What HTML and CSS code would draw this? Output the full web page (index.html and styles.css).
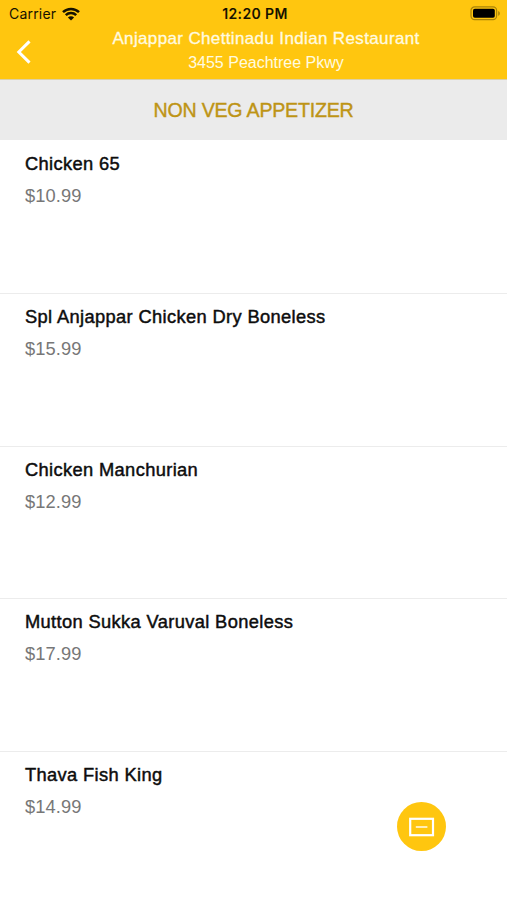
FILE: index.html
```html
<!DOCTYPE html>
<html lang="en">
<head>
  <meta charset="UTF-8">
  <meta name="viewport" content="width=device-width, initial-scale=1.0">
  <title>Anjappar Chettinadu Indian Restaurant</title>
  <link rel="stylesheet" href="styles.css">
</head>
<body>
  <header class="header">
    <div class="status-bar">
      <div class="status-left">
        <span class="carrier">Carrier</span>
        <svg width="18" height="14" viewBox="0 0 18 14">
          <path d="M1 5.2a11.4 11.4 0 0 1 16 0M3.8 8.1a7.4 7.4 0 0 1 10.4 0" fill="none" stroke="#161200" stroke-width="2.5"/>
          <path d="M9 13.6L5.9 10.6a4.4 4.4 0 0 1 6.2 0z" fill="#161200"/>
        </svg>
      </div>
      <span class="time">12:20 PM</span>
      <div class="status-right">
        <svg width="31" height="15" viewBox="0 0 31 15">
          <rect x="1" y="0.9" width="25.6" height="12.8" rx="3.6" fill="none" stroke="#a98409" stroke-width="1.2"/>
          <rect x="3" y="2.8" width="21.8" height="9" rx="1.8" fill="#000"/>
          <path d="M28.2 5v4.8c2.2-.7 2.2-4.1 0-4.8z" fill="#a98409"/>
        </svg>
      </div>
    </div>
    <div class="nav">
      <button class="back-btn" aria-label="Back">
        <svg width="16" height="26" viewBox="0 0 16 26">
          <path d="M14.5 2.4L3.8 13l10.7 10.6" fill="none" stroke="#fff" stroke-width="3"/>
        </svg>
      </button>
      <div class="nav-text">
        <h1>Anjappar Chettinadu Indian Restaurant</h1>
        <p>3455 Peachtree Pkwy</p>
      </div>
    </div>
  </header>
  <h2 class="category">NON VEG APPETIZER</h2>
  <ul class="menu">
    <li class="item">
      <h3>Chicken 65</h3>
      <p class="price">$10.99</p>
    </li>
    <li class="item">
      <h3>Spl Anjappar Chicken Dry Boneless</h3>
      <p class="price">$15.99</p>
    </li>
    <li class="item">
      <h3>Chicken Manchurian</h3>
      <p class="price">$12.99</p>
    </li>
    <li class="item">
      <h3>Mutton Sukka Varuval Boneless</h3>
      <p class="price">$17.99</p>
    </li>
    <li class="item">
      <h3>Thava Fish King</h3>
      <p class="price">$14.99</p>
    </li>
  </ul>
  <button class="menu-btn" aria-label="Menu">
    <svg width="26" height="20" viewBox="0 0 26 20">
      <rect x="1.2" y="1.8" width="22.8" height="16.4" fill="none" stroke="#fff" stroke-width="2.2"/>
      <path d="M6.8 10h11.6" stroke="#fff" stroke-width="1.4"/>
    </svg>
  </button>
</body>
</html>
```

FILE: styles.css
```css
body {
  font-family: "Liberation Sans", Arial, sans-serif;
  background: #fff;
  margin: 0;
  height: 100vh;
  overflow: hidden;
}
h1, h2, h3, p, ul {
  margin: 0;
  padding: 0;
  font-weight: normal;
}
button {
  border: none;
  padding: 0;
  cursor: pointer;
}
svg {
  display: block;
}
.header {
  height: 80px;
  box-sizing: border-box;
  background: #ffc60f;
  border-bottom: 1px solid #ddd0a5;
}
.status-bar {
  display: grid;
  grid-template-columns: 1fr auto 1fr;
  align-items: center;
  height: 27px;
  padding: 0 6px 0 9px;
  color: #161200;
  font-family: Inter, sans-serif;
}
.status-left {
  display: flex;
  align-items: center;
  gap: 6px;
}
.carrier {
  font-size: 14px;
  line-height: 27px;
  letter-spacing: 0.2px;
}
.time {
  font-size: 14px;
  font-weight: 600;
  line-height: 27px;
  letter-spacing: 0.4px;
}
.status-right {
  display: flex;
  justify-content: flex-end;
}
.nav {
  display: grid;
  grid-template-columns: 48px 1fr 23px;
  height: 52px;
}
.back-btn {
  background: transparent;
  padding: 0 0 0 15px;
  height: 50px;
}
.nav-text {
  text-align: center;
  color: #fffbe0;
}
.nav-text h1 {
  font-size: 17px;
  line-height: 24px;
  letter-spacing: 0.36px;
  -webkit-text-stroke: 0.3px #fffbe0;
}
.nav-text p {
  font-size: 16px;
  line-height: 24px;
}
.category {
  height: 60px;
  line-height: 61px;
  text-align: center;
  font-size: 19.6px;
  letter-spacing: -0.22px;
  color: #be9415;
  background: #ebebeb;
  -webkit-text-stroke: 0.4px #be9415;
}
.menu {
  list-style: none;
}
.item {
  height: 152.75px;
  box-sizing: border-box;
  padding: 9px 25px 0;
}
.item + .item {
  padding-top: 8px;
  border-top: 1px solid #ececec;
}
.item h3 {
  font-size: 18.3px;
  line-height: 30px;
  letter-spacing: 0.36px;
  color: #0d0d0d;
  -webkit-text-stroke: 0.45px #0d0d0d;
}
.price {
  font-size: 18.3px;
  line-height: 33px;
  letter-spacing: 0.1px;
  color: #777;
}
.menu-btn {
  position: fixed;
  left: 397px;
  top: 802px;
  width: 49px;
  height: 49px;
  border-radius: 50%;
  background: #ffc60f;
  display: flex;
  align-items: center;
  justify-content: center;
}
```
